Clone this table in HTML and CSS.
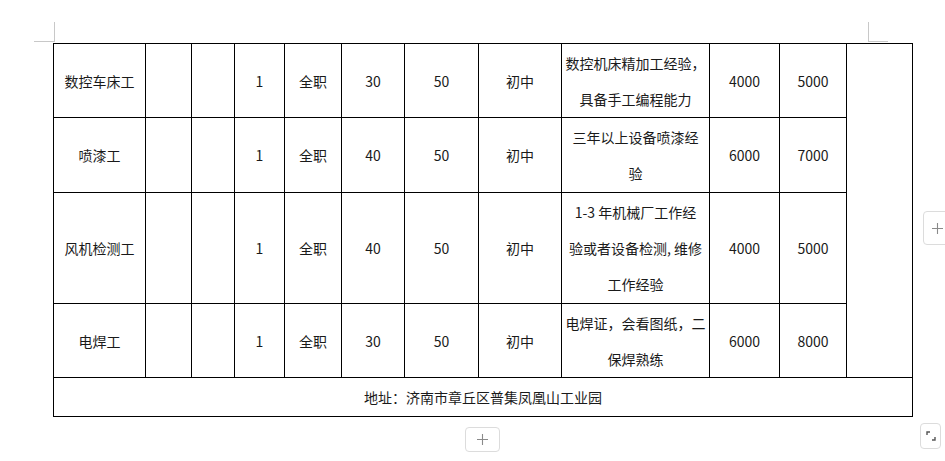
FILE: index.html
```html
<!DOCTYPE html>
<html lang="zh-CN">
<head>
<meta charset="utf-8">
<link rel="stylesheet" href="styles.css">
</head>
<body>
<div class="page">
  <span class="mark mark-tl-v"></span>
  <span class="mark mark-tl-h"></span>
  <span class="mark mark-tr-v"></span>
  <span class="mark mark-tr-h"></span>
  <table class="jobs">
    <colgroup>
      <col class="c1"><col class="c2"><col class="c3"><col class="c4"><col class="c5"><col class="c6">
      <col class="c7"><col class="c8"><col class="c9"><col class="c10"><col class="c11"><col class="c12">
    </colgroup>
    <tr class="r1">
      <td>数控车床工</td><td></td><td></td><td>1</td><td>全职</td><td>30</td><td>50</td><td>初中</td>
      <td>数控机床精加工经验，<br>具备手工编程能力</td><td>4000</td><td>5000</td><td rowspan="4"></td>
    </tr>
    <tr class="r2">
      <td>喷漆工</td><td></td><td></td><td>1</td><td>全职</td><td>40</td><td>50</td><td>初中</td>
      <td>三年以上设备喷漆经<br>验</td><td>6000</td><td>7000</td>
    </tr>
    <tr class="r3">
      <td>风机检测工</td><td></td><td></td><td>1</td><td>全职</td><td>40</td><td>50</td><td>初中</td>
      <td>1-3 年机械厂工作经<br>验或者设备检测, 维修<br>工作经验</td><td>4000</td><td>5000</td>
    </tr>
    <tr class="r4">
      <td>电焊工</td><td></td><td></td><td>1</td><td>全职</td><td>30</td><td>50</td><td>初中</td>
      <td>电焊证，会看图纸，二<br>保焊熟练</td><td>6000</td><td>8000</td>
    </tr>
    <tr class="r5">
      <td colspan="12">地址：济南市章丘区普集凤凰山工业园</td>
    </tr>
  </table>
  <button class="tool tool-right" type="button" aria-label="add column">
    <svg width="13" height="13" viewBox="0 0 13 13"><path d="M6.5 1v11M1 6.5h11" stroke="#8a8a8a" stroke-width="1.1" fill="none"/></svg>
  </button>
  <button class="tool tool-bottom" type="button" aria-label="add row">
    <svg width="13" height="13" viewBox="0 0 13 13"><path d="M6.5 1v11M1 6.5h11" stroke="#8a8a8a" stroke-width="1.1" fill="none"/></svg>
  </button>
  <button class="tool tool-expand" type="button" aria-label="expand">
    <svg width="12" height="12" viewBox="0 0 12 12"><path d="M2 5V2h3M10 7v3H7" stroke="#555" stroke-width="1.4" fill="none"/></svg>
  </button>
</div>
</body>
</html>
```

FILE: styles.css
```css
html, body {
  margin: 0;
  padding: 0;
  background: #fff;
}
body {
  width: 945px;
  height: 461px;
  overflow: hidden;
  font-family: "Noto Sans CJK SC", "Noto Sans", sans-serif;
  color: #1a1a1a;
}
.page {
  position: relative;
  width: 945px;
  height: 461px;
  padding: 43px 0 0 53px;
  box-sizing: border-box;
}
.mark {
  position: absolute;
  background: #c8c8c8;
}
.mark-tl-v { left: 54px; top: 22px; width: 1px; height: 20px; }
.mark-tl-h { left: 34px; top: 41px; width: 20px; height: 1px; }
.mark-tr-v { left: 868px; top: 22px; width: 1px; height: 20px; }
.mark-tr-h { left: 868px; top: 41px; width: 20px; height: 1px; }

.jobs {
  border-collapse: collapse;
  table-layout: fixed;
  width: 859px;
  font-size: 14px;
}
.jobs td {
  border: 1px solid #000;
  padding: 0;
  text-align: center;
  vertical-align: middle;
  line-height: 36px;
  white-space: nowrap;
}
.c1 { width: 92px; }
.c2 { width: 46px; }
.c3 { width: 43px; }
.c4 { width: 50px; }
.c5 { width: 57px; }
.c6 { width: 63px; }
.c7 { width: 74px; }
.c8 { width: 83px; }
.c9 { width: 148px; }
.c10 { width: 70px; }
.c11 { width: 67px; }
.c12 { width: 66px; }
.r1 { height: 74px; }
.r2 { height: 75px; }
.r3 { height: 111px; }
.r4 { height: 74px; }
.r5 { height: 39px; }
.r5 td { line-height: 20px; }

.tool {
  position: absolute;
  display: flex;
  align-items: center;
  justify-content: center;
  padding: 0;
  background: #fff;
  border: 1px solid #dcdcdc;
  border-radius: 4px;
  box-sizing: border-box;
}
.tool-right { left: 923px; top: 211px; width: 30px; height: 34px; justify-content: flex-start; padding-left: 7px; }
.tool-bottom { left: 465px; top: 427px; width: 35px; height: 25px; }
.tool-expand { left: 920px; top: 423px; width: 21px; height: 26px; }
```
